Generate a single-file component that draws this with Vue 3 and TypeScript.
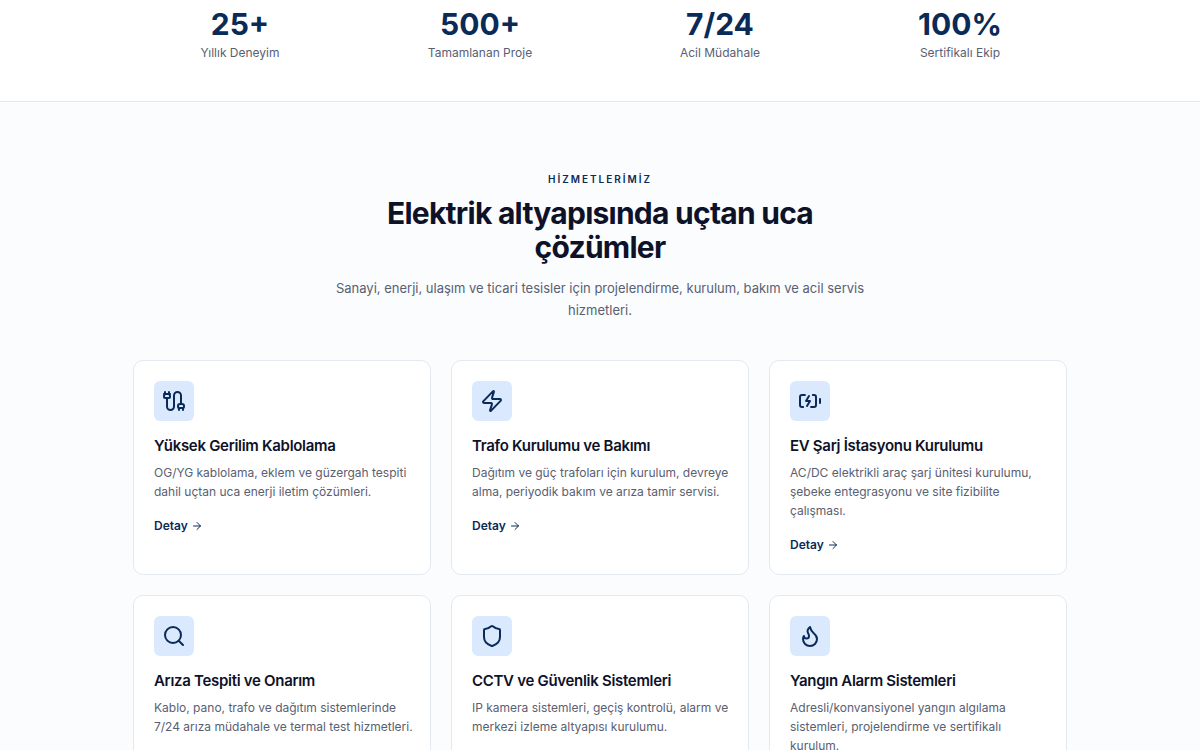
<script setup lang="ts">
interface Stat {
  value: string
  label: string
}

interface Service {
  title: string
  text: string
  href: string
  icon: string[]
}

const stats: Stat[] = [
  { value: '25+', label: 'Yıllık Deneyim' },
  { value: '500+', label: 'Tamamlanan Proje' },
  { value: '7/24', label: 'Acil Müdahale' },
  { value: '100%', label: 'Sertifikalı Ekip' },
]

const services: Service[] = [
  {
    title: 'Yüksek Gerilim Kablolama',
    text: 'OG/YG kablolama, eklem ve güzergah tespiti dahil uçtan uca enerji iletim çözümleri.',
    href: '#kablolama',
    icon: [
      'M17 21v-2a1 1 0 0 1-1-1v-1a2 2 0 0 1 2-2h2a2 2 0 0 1 2 2v1a1 1 0 0 1-1 1',
      'M19 15V6.5a1 1 0 0 0-7 0v11a1 1 0 0 1-7 0V9',
      'M21 21v-2h-4',
      'M3 5V3',
      'M7 5V3',
      'M4 5a2 2 0 0 0-2 2v1a1 1 0 0 0 1 1h4a1 1 0 0 0 1-1V7a2 2 0 0 0-2-2',
      'M2 5h6',
    ],
  },
  {
    title: 'Trafo Kurulumu ve Bakımı',
    text: 'Dağıtım ve güç trafoları için kurulum, devreye alma, periyodik bakım ve arıza tamir servisi.',
    href: '#trafo',
    icon: [
      'M4 14a1 1 0 0 1-.78-1.63l9.9-10.2a.5.5 0 0 1 .86.46l-1.92 6.02A1 1 0 0 0 13 10h7a1 1 0 0 1 .78 1.63l-9.9 10.2a.5.5 0 0 1-.86-.46l1.92-6.02A1 1 0 0 0 11 14z',
    ],
  },
  {
    title: 'EV Şarj İstasyonu Kurulumu',
    text: 'AC/DC elektrikli araç şarj ünitesi kurulumu, şebeke entegrasyonu ve site fizibilite çalışması.',
    href: '#ev-sarj',
    icon: [
      'm11 7-3 5h4l-3 5',
      'M14.856 6H16a2 2 0 0 1 2 2v8a2 2 0 0 1-2 2h-2.935',
      'M22 14v-4',
      'M5.14 18H4a2 2 0 0 1-2-2V8a2 2 0 0 1 2-2h2.936',
    ],
  },
  {
    title: 'Arıza Tespiti ve Onarım',
    text: 'Kablo, pano, trafo ve dağıtım sistemlerinde 7/24 arıza müdahale ve termal test hizmetleri.',
    href: '#ariza',
    icon: ['M19 11a8 8 0 1 1-16 0 8 8 0 0 1 16 0z', 'm21 21-4.3-4.3'],
  },
  {
    title: 'CCTV ve Güvenlik Sistemleri',
    text: 'IP kamera sistemleri, geçiş kontrolü, alarm ve merkezi izleme altyapısı kurulumu.',
    href: '#cctv',
    icon: [
      'M20 13c0 5-3.5 7.5-7.66 8.95a1 1 0 0 1-.67-.01C7.5 20.5 4 18 4 13V6a1 1 0 0 1 1-1c2 0 4.5-1.2 6.24-2.72a1.17 1.17 0 0 1 1.52 0C14.51 3.81 17 5 19 5a1 1 0 0 1 1 1z',
    ],
  },
  {
    title: 'Yangın Alarm Sistemleri',
    text: 'Adresli/konvansiyonel yangın algılama sistemleri, projelendirme ve sertifikalı kurulum.',
    href: '#yangin',
    icon: [
      'M8.5 14.5A2.5 2.5 0 0 0 11 12c0-1.38-.5-2-1-3-1.072-2.143-.224-4.054 2-6 .5 2.5 2 4.9 4 6.5 2 1.6 3 3.5 3 5.5a7 7 0 1 1-14 0c0-1.153.433-2.294 1-3a2.5 2.5 0 0 0 2.5 2.5z',
    ],
  },
]
</script>

<template>
  <main class="page">
    <section class="stats" aria-label="Rakamlarla biz">
      <div class="container stats-grid">
        <div v-for="s in stats" :key="s.label" class="stat">
          <strong class="stat-value">{{ s.value }}</strong>
          <span class="stat-label">{{ s.label }}</span>
        </div>
      </div>
    </section>

    <section class="services">
      <header class="intro">
        <p class="eyebrow">HİZMETLERİMİZ</p>
        <h2 class="heading">Elektrik altyapısında uçtan uca çözümler</h2>
        <p class="lead">
          Sanayi, enerji, ulaşım ve ticari tesisler için projelendirme, kurulum, bakım ve acil servis hizmetleri.
        </p>
      </header>

      <div class="container cards">
        <article v-for="s in services" :key="s.title" class="card">
          <span class="tile">
            <svg class="icon" viewBox="0 0 24 24" aria-hidden="true">
              <path v-for="d in s.icon" :key="d" :d="d" />
            </svg>
          </span>
          <h3 class="card-title">{{ s.title }}</h3>
          <p class="card-text">{{ s.text }}</p>
          <a class="more" :href="s.href">
            Detay
            <svg class="arrow" viewBox="0 0 24 24" aria-hidden="true">
              <path d="M5 12h14" />
              <path d="m12 5 7 7-7 7" />
            </svg>
          </a>
        </article>
      </div>
    </section>
  </main>
</template>

<style>
body {
  margin: 0;
  background: #fafcfe;
}
html {
  scrollbar-width: none;
}
</style>

<style scoped>
.page {
  font-family: Inter, "Liberation Sans", sans-serif;
  color: #0e1228;
  background: #fafcfe;
}
.container {
  max-width: 934px;
  margin: 0 auto;
}
.stats {
  background: #fff;
  border-bottom: 1px solid #e4e8ee;
  padding: 4px 20px 40px;
}
.stats-grid {
  max-width: 960px;
  display: grid;
  grid-template-columns: repeat(4, 1fr);
}
.stat {
  display: flex;
  flex-direction: column;
  align-items: center;
}
.stat-value {
  font-size: 30px;
  line-height: 40px;
  font-weight: 700;
  color: #0a2a57;
}
.stat-label {
  font-size: 12px;
  line-height: 17px;
  color: #596072;
}
.services {
  padding: 69px 20px;
}
.intro {
  max-width: 560px;
  margin: 0 auto 39px;
  text-align: center;
}
.eyebrow {
  margin: 0 0 9px;
  font-size: 10px;
  line-height: 16px;
  font-weight: 600;
  letter-spacing: 2px;
  color: #0a2a57;
}
.heading {
  margin: 0 0 13px;
  font-size: 30px;
  line-height: 34px;
  font-weight: 700;
  letter-spacing: -0.025em;
}
.lead {
  margin: 0;
  font-size: 13px;
  line-height: 22px;
  color: #596072;
}
.cards {
  display: grid;
  grid-template-columns: repeat(3, 1fr);
  gap: 20px;
}
.card {
  display: flex;
  flex-direction: column;
  align-items: flex-start;
  padding: 20px 16px 20px 20px;
  background: #fff;
  border: 1px solid #e4e9f0;
  border-radius: 10px;
}
.tile {
  display: grid;
  place-items: center;
  width: 40px;
  height: 40px;
  border-radius: 6px;
  background: #dbe9fe;
}
.icon,
.arrow {
  fill: none;
  stroke: currentColor;
  stroke-width: 2;
  stroke-linecap: round;
  stroke-linejoin: round;
}
.icon {
  width: 24px;
  height: 24px;
  color: #0a2a57;
}
.card-title {
  margin: 12px 0 4px;
  font-size: 15px;
  line-height: 26px;
  font-weight: 600;
  letter-spacing: -0.02em;
}
.card-text {
  margin: 0 0 16px;
  font-size: 12px;
  line-height: 19px;
  color: #596072;
}
.more {
  display: inline-flex;
  align-items: center;
  gap: 3px;
  font-size: 12px;
  line-height: 18px;
  font-weight: 600;
  color: #0a2a57;
  text-decoration: none;
}
.arrow {
  width: 12px;
  height: 12px;
}
</style>
